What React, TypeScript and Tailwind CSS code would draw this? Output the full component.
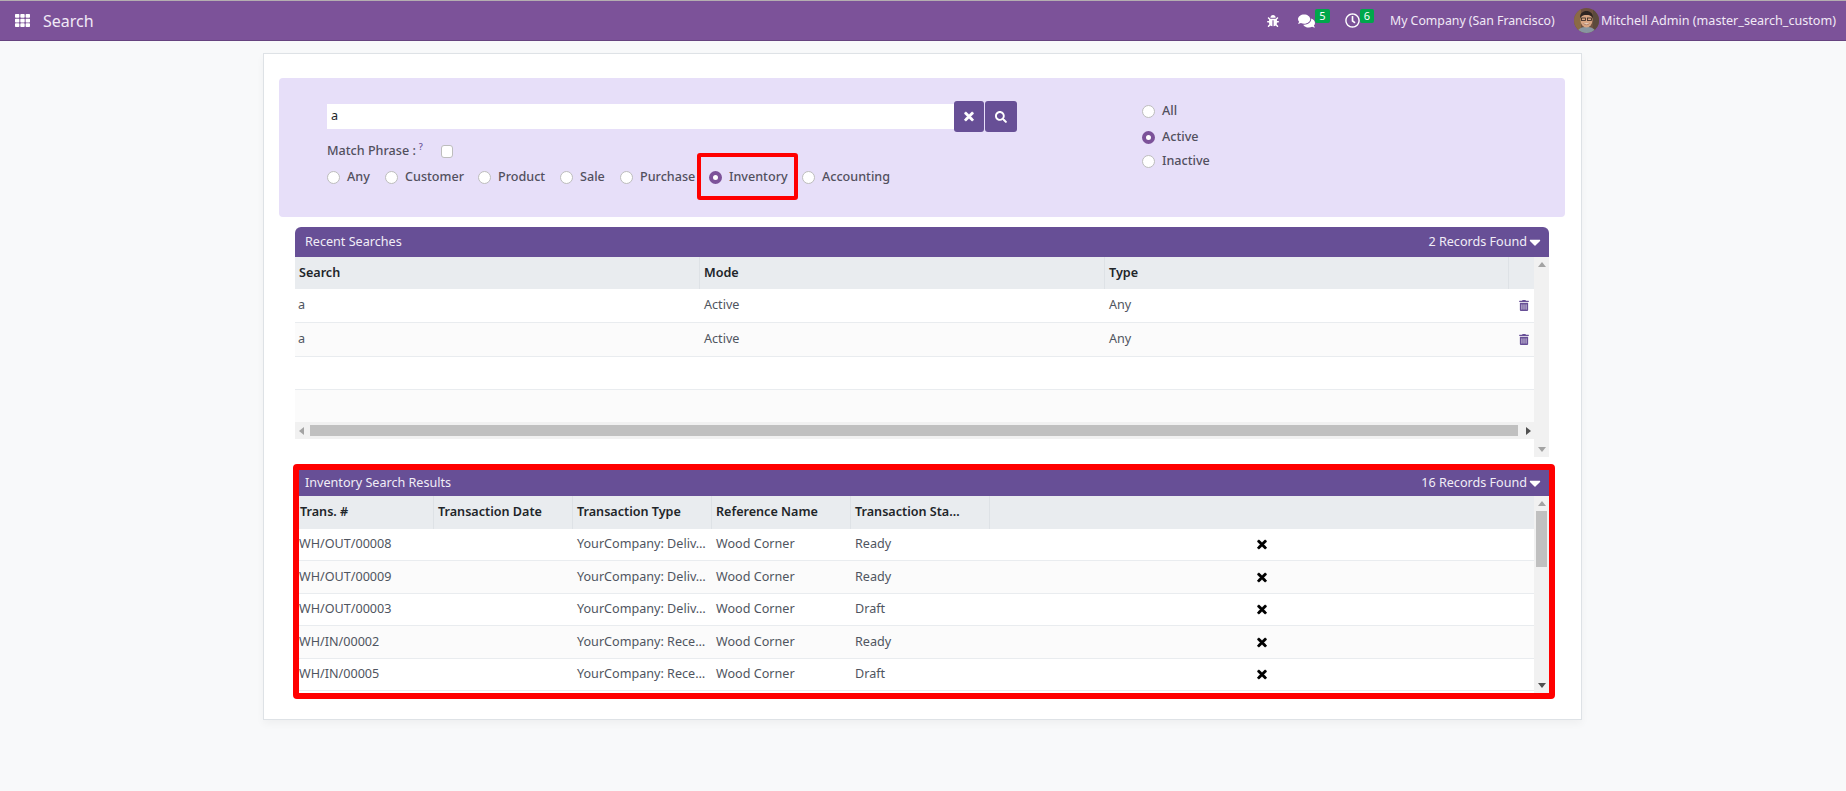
import { FaBug, FaCaretDown, FaComments, FaRegClock, FaSearch, FaTh, FaTimes, FaTrashAlt } from 'react-icons/fa';

const recentRows = [
  { search: 'a', mode: 'Active', type: 'Any', filled: true },
  { search: 'a', mode: 'Active', type: 'Any', filled: true },
  { search: '', mode: '', type: '', filled: false },
  { search: '', mode: '', type: '', filled: false },
];

const inventoryRows = [
  { num: 'WH/OUT/00008', type: 'YourCompany: Deliv…', status: 'Ready', h: 'h-[32px]' },
  { num: 'WH/OUT/00009', type: 'YourCompany: Deliv…', status: 'Ready', h: 'h-[33px]' },
  { num: 'WH/OUT/00003', type: 'YourCompany: Deliv…', status: 'Draft', h: 'h-[32px]' },
  { num: 'WH/IN/00002', type: 'YourCompany: Rece…', status: 'Ready', h: 'h-[33px]' },
  { num: 'WH/IN/00005', type: 'YourCompany: Rece…', status: 'Draft', h: 'h-[32px]' },
];

function Radio({ label, checked, className }: { label: string; checked?: boolean; className?: string }) {
  return (
    <label className={`flex h-4 items-center ${className ?? ''}`}>
      <input
        type="radio"
        readOnly
        checked={!!checked}
        className={`h-[13px] w-[13px] shrink-0 appearance-none rounded-full bg-white ${
          checked ? 'border-[4px] border-[#7c5299]' : 'border border-[#bdbdbd]'
        }`}
      />
      <span className="mb-[1px] ml-[7px] whitespace-nowrap font-medium text-[#52505e]">{label}</span>
    </label>
  );
}

function Arrow({ dir, dark }: { dir: 'up' | 'down' | 'left' | 'right'; dark?: boolean }) {
  const points = {
    up: '0,6 4,1 8,6',
    down: '0,2 8,2 4,7',
    left: '6,0 6,8 1,4',
    right: '2,0 2,8 7,4',
  }[dir];
  return (
    <svg width="8" height="8" viewBox="0 0 8 8" className="block">
      <polygon points={points} fill={dark ? '#505050' : '#a3a3a3'} />
    </svg>
  );
}

function Avatar() {
  return (
    <svg width="25" height="25" viewBox="0 0 25 25" className="shrink-0">
      <defs>
        <clipPath id="avatar-clip">
          <circle cx="12.5" cy="12.5" r="12.5" />
        </clipPath>
      </defs>
      <g clipPath="url(#avatar-clip)">
        <rect width="25" height="25" fill="#6e5140" />
        <rect x="0" y="0" width="7" height="25" fill="#8b6a45" />
        <rect x="19" y="0" width="6" height="25" fill="#5b4a3c" />
        <path d="M3 25c1-5 5-6 9.500-6s8.500 1 9.500 6z" fill="#8896a0" />
        <ellipse cx="12.500" cy="12" rx="6" ry="7.500" fill="#d7a583" />
        <path d="M6 10c0-5 3-7 6.500-7S19 5 19 10c-2-2.500-4-3-6.500-3S8 7.500 6 10z" fill="#2e2522" />
        <rect x="7.500" y="10" width="4" height="2.500" fill="none" stroke="#2e2522" strokeWidth="0.800" />
        <rect x="13.500" y="10" width="4" height="2.500" fill="none" stroke="#2e2522" strokeWidth="0.800" />
        <path d="M9.500 15.500c1.500 1.500 4.500 1.500 6 0" fill="#f4ece6" stroke="#7d4c3a" strokeWidth="0.500" />
      </g>
    </svg>
  );
}

function TopBar() {
  return (
    <header className="flex h-[41px] items-center border-t border-b border-t-[#b4aeb0] border-b-[#66437f] bg-[#7c5299] text-white">
      <FaTh className="ml-[15px] h-[15px] w-[15px] text-white" />
      <span className="ml-[13px] text-[16px] leading-none text-[#f1e9f6]">Search</span>
      <div className="ml-auto flex items-center pr-[10px] text-[#f1e9f6]">
        <FaBug className="h-[12px] w-[12px] text-white" />
        <div className="ml-[19px] flex items-center">
          <FaComments className="h-[16px] w-[17px] text-white" />
          <span className="mb-[10px] flex h-[14px] w-[15px] items-center justify-center rounded-[2px] bg-[#00a74b] text-[11px] leading-none text-white">5</span>
        </div>
        <div className="ml-[15px] flex items-center">
          <FaRegClock className="h-[15px] w-[15px] text-white" />
          <span className="mb-[10px] flex h-[14px] w-[14px] items-center justify-center rounded-[2px] bg-[#00a74b] text-[11px] leading-none text-white">6</span>
        </div>
        <span className="ml-[16px] w-[165px] whitespace-nowrap text-[12.300px]">My Company (San Francisco)</span>
        <div className="ml-[19px] flex items-center">
          <Avatar />
          <span className="ml-[2px] w-[235px] whitespace-nowrap">Mitchell Admin (master_search_custom)</span>
        </div>
      </div>
    </header>
  );
}

function SearchPanel() {
  return (
    <div className="flex h-[139px] w-[1286px] rounded-[4px] bg-[#e7dff9] pl-[48px]">
      <div className="w-[690px] pt-[23px]">
        <div className="flex items-center">
          <input defaultValue="a" className="h-[25px] w-[627px] bg-white pb-[2px] pl-[4px] text-[#212529] outline-none" />
          <button className="flex h-[31px] w-[30px] items-center justify-center rounded-[3px] bg-[#674f96] text-white">
            <FaTimes className="h-[13px] w-[10px] [stroke-width:30]" />
          </button>
          <button className="ml-[1px] flex h-[31px] w-[32px] items-center justify-center rounded-[3px] bg-[#674f96] text-white">
            <FaSearch className="h-[12px] w-[12px]" />
          </button>
        </div>
        <div className="mt-[11px] flex h-4 items-center">
          <div className="flex w-[114px]">
            <span className="whitespace-nowrap pb-[1px] font-medium text-[#52505e]">Match Phrase :</span>
            <sup className="ml-[3px] mt-[9px] text-[9px] font-medium text-[#674f96]">?</sup>
          </div>
          <input type="checkbox" className="h-[13px] w-[12px] appearance-none rounded-[3px] border border-[#bdbdbd] bg-white" />
        </div>
        <div className="mt-[10px] flex">
          <Radio label="Any" className="w-[58px]" />
          <Radio label="Customer" className="w-[93px]" />
          <Radio label="Product" className="w-[82px]" />
          <Radio label="Sale" className="w-[60px]" />
          <Radio label="Purchase" className="w-[89px]" />
          <div className="relative w-[93px]">
            <Radio label="Inventory" checked />
            <div className="pointer-events-none absolute left-[-12px] top-[-16px] h-[47px] w-[101px] rounded-[3px] border-[4.500px] border-[#ff0000]" />
          </div>
          <Radio label="Accounting" />
        </div>
      </div>
      <div className="ml-[125px] pt-[25px]">
        <Radio label="All" />
        <Radio label="Active" checked className="mt-[10px]" />
        <Radio label="Inactive" className="mt-[8px]" />
      </div>
    </div>
  );
}

function SectionHeader({ title, count, className }: { title: string; count: string; className: string }) {
  return (
    <div className={`flex items-center justify-between bg-[#674f96] pr-[8px] text-[#f1edf6] ${className}`}>
      <span className="pb-[1px]">{title}</span>
      <span className="flex items-center">
        <span className="pb-[1px]">{count}</span>
        <FaCaretDown className="ml-[2px] h-[18px] w-[12px] text-white" />
      </span>
    </div>
  );
}

function RecentSearches() {
  return (
    <section className="ml-[16px] mt-[10px] w-[1254px]">
      <SectionHeader title="Recent Searches" count="2 Records Found" className="h-[30px] rounded-t-[6px] pl-[10px]" />
      <div className="flex h-[200px]">
        <div className="w-[1239px]">
          <div className="grid h-[32px] grid-cols-[405px_405px_404px_25px] items-stretch bg-[#e9ecef] font-semibold text-[#212529]">
            <div className="flex items-center border-r border-[#dee2e6] pb-[1px] pl-[4px]">Search</div>
            <div className="flex items-center border-r border-[#dee2e6] pb-[1px] pl-[4px]">Mode</div>
            <div className="flex items-center border-r border-[#dee2e6] pb-[1px] pl-[4px]">Type</div>
            <div />
          </div>
          {recentRows.map((row, i) => (
            <div
              key={i}
              className={`grid grid-cols-[405px_405px_404px_25px] items-center text-[#4f5560] ${
                i === 3 ? 'h-[32px]' : i === 2 ? 'h-[33px] border-b border-[#e9ecef]' : 'h-[34px] border-b border-[#e9ecef]'
              } ${i % 2 === 1 ? 'bg-[#fbfbfb]' : 'bg-white'}`}
            >
              <div className="pb-[1px] pl-[3px]">{row.search}</div>
              <div className="pb-[1px] pl-[4px]">{row.mode}</div>
              <div className="pb-[1px] pl-[4px]">{row.type}</div>
              <div className="flex justify-end pr-[5px]">
                {row.filled && <FaTrashAlt className="h-[11px] w-[10px] text-[#674f96]" />}
              </div>
            </div>
          ))}
          <div className="flex h-[17px] items-center bg-[#f1f1f1]">
            <div className="ml-[3px] w-[12px]">
              <Arrow dir="left" />
            </div>
            <div className="h-[11px] w-[1208px] bg-[#c0c0c0]" />
            <div className="ml-[6px]">
              <Arrow dir="right" dark />
            </div>
          </div>
        </div>
        <div className="flex w-[15px] flex-col items-center justify-between bg-[#f1f1f1] py-[4px]">
          <Arrow dir="up" />
          <Arrow dir="down" />
        </div>
      </div>
    </section>
  );
}

function InventoryResults() {
  return (
    <section className="ml-[14px] mt-[7px] h-[235px] w-[1262px] rounded-[4px] border-[6px] border-[#ff0000]">
      <SectionHeader title="Inventory Search Results" count="16 Records Found" className="h-[26px] pl-[6px]" />
      <div className="flex h-[197px]">
        <div className="w-[1235px]">
          <div className="grid h-[33px] grid-cols-[135px_139px_139px_139px_139px_1fr] bg-[#e9ecef] font-semibold text-[#212529]">
            <div className="flex items-center border-r border-[#dee2e6] pb-[1px] pl-[1px]">Trans. #</div>
            <div className="flex items-center border-r border-[#dee2e6] pb-[1px] pl-[4px]">Transaction Date</div>
            <div className="flex items-center border-r border-[#dee2e6] pb-[1px] pl-[4px]">Transaction Type</div>
            <div className="flex items-center border-r border-[#dee2e6] pb-[1px] pl-[4px]">Reference Name</div>
            <div className="flex items-center border-r border-[#dee2e6] pb-[1px] pl-[4px]">Transaction Sta…</div>
            <div />
          </div>
          {inventoryRows.map((row, i) => (
            <div
              key={row.num}
              className={`grid grid-cols-[135px_139px_139px_139px_139px_1fr] items-center border-b border-[#e9ecef] text-[#4f5560] ${row.h} ${
                i % 2 === 1 ? 'bg-[#fbfbfb]' : 'bg-white'
              }`}
            >
              <div className="pb-[1px]">{row.num}</div>
              <div />
              <div className="pb-[1px] pl-[4px]">{row.type}</div>
              <div className="pb-[1px] pl-[4px]">Wood Corner</div>
              <div className="pb-[1px] pl-[4px]">{row.status}</div>
              <div className="flex justify-center">
                <FaTimes className="h-[13px] w-[10px] text-black [stroke-width:30]" />
              </div>
            </div>
          ))}
        </div>
        <div className="relative flex w-[15px] flex-col items-center justify-between bg-[#f1f1f1] py-[4px]">
          <Arrow dir="up" />
          <div className="absolute left-[2px] top-[15px] h-[56px] w-[11px] bg-[#c0c0c0]" />
          <Arrow dir="down" dark />
        </div>
      </div>
    </section>
  );
}

export default function App() {
  return (
    <div className="h-[791px] overflow-hidden bg-[#f8f9fa] font-['Noto_Sans',sans-serif] text-[12.600px] leading-[16px]">
      <TopBar />
      <main className="ml-[263px] mt-[12px] h-[667px] w-[1319px] border border-[#dee2e6] bg-white pl-[15px] pt-[24px] shadow-[0_4px_8px_rgba(0,0,0,0.04)]">
        <SearchPanel />
        <RecentSearches />
        <InventoryResults />
      </main>
    </div>
  );
}
